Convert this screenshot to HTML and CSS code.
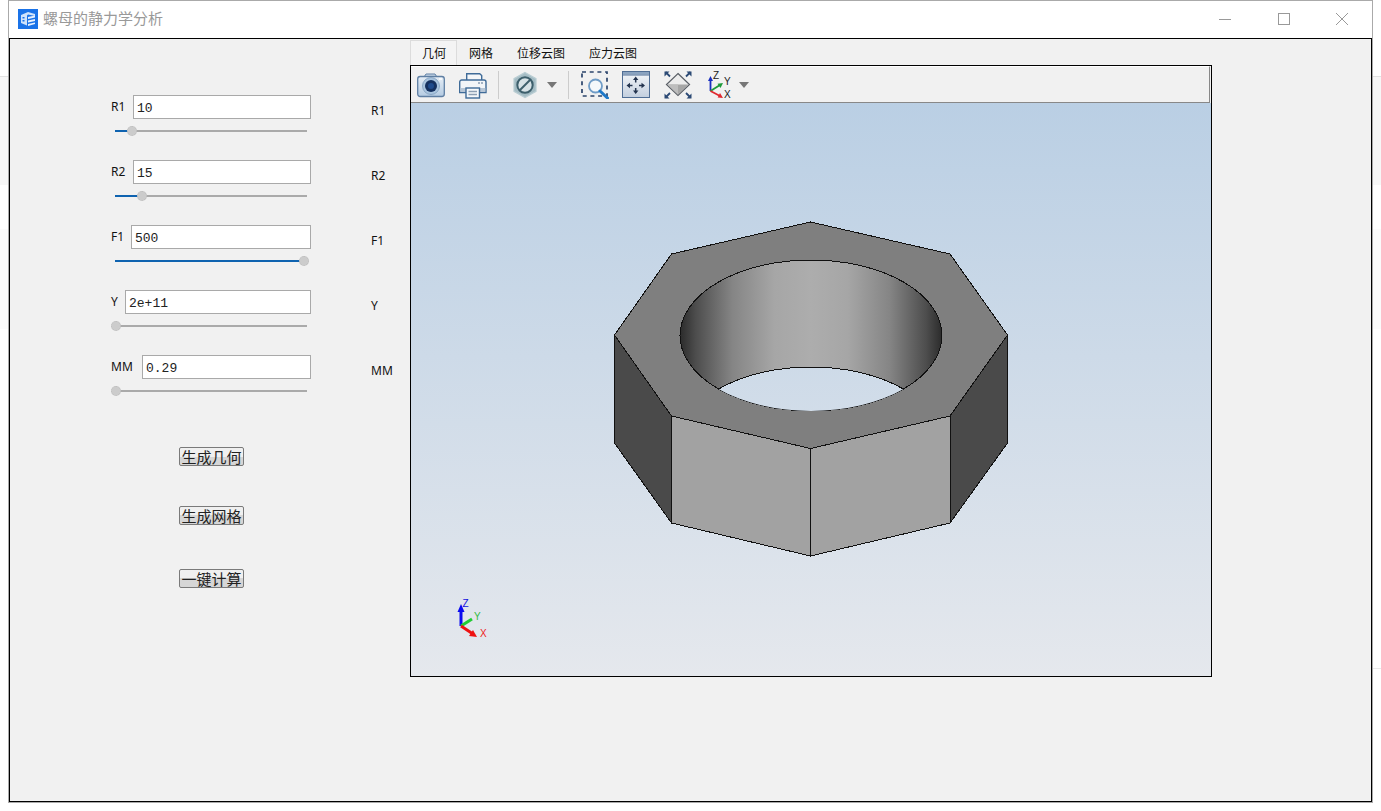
FILE: index.html
```html
<!DOCTYPE html>
<html lang="zh">
<head>
<meta charset="utf-8">
<title>螺母的静力学分析</title>
<link rel="stylesheet" href="styles.css">
</head>
<body>
<div class="desk-band desk-band-a desk-left"></div>
<div class="desk-band desk-band-b desk-left"></div>
<div class="desk-band desk-band-a desk-right"></div>
<div class="desk-band desk-band-b desk-right"></div>
<div class="desk-rule"></div>
<main class="window">
  <header class="titlebar">
    <svg class="logo" viewBox="0 0 20 20" width="20" height="20">
      <rect width="20" height="20" fill="#1a73e8"/>
      <path d="M3 6 L10 3 L17 5 L17 7 L10 5.500 L9 6.500 L9 16.500 L3 14 Z" fill="#cfe3fb"/>
      <path d="M10 8 L17 6.500 V8.500 L10 10 Z M10 11.500 L17 10 V12 L10 13.500 Z M10 15 L17 13.500 V15 L10 17 Z" fill="#e8f2ff"/>
      <path d="M4.500 8 H6.500 V9.500 H4.500 Z M4.500 11 H6.500 V12.500 H4.500 Z" fill="#1a73e8"/>
    </svg>
    <span class="title">螺母的静力学分析</span>
    <div class="winbtns">
      <svg class="winbtn" viewBox="0 0 12 12" width="12" height="12"><path d="M0 6.500 H12" stroke="#999" fill="none"/></svg>
      <svg class="winbtn" viewBox="0 0 12 12" width="12" height="12"><rect x=".5" y=".5" width="11" height="11" stroke="#999" fill="none"/></svg>
      <svg class="winbtn" viewBox="0 0 12 12" width="12" height="12"><path d="M0 0 L12 12 M12 0 L0 12" stroke="#999" fill="none"/></svg>
    </div>
  </header>
  <div class="client">
    <section class="controls">
      <div class="param">
        <div class="field"><label class="lbl">R1</label><div class="input">10</div></div>
        <div class="slider"><div class="fill" style="width:17px"><i class="knob"></i></div></div>
      </div>
      <div class="param">
        <div class="field"><label class="lbl">R2</label><div class="input">15</div></div>
        <div class="slider"><div class="fill" style="width:27px"><i class="knob"></i></div></div>
      </div>
      <div class="param">
        <div class="field"><label class="lbl">F1</label><div class="input input-f">500</div></div>
        <div class="slider"><div class="fill" style="width:189px"><i class="knob"></i></div></div>
      </div>
      <div class="param">
        <div class="field"><label class="lbl">Y</label><div class="input input-y">2e+11</div></div>
        <div class="slider"><div class="fill" style="width:1px"><i class="knob"></i></div></div>
      </div>
      <div class="param">
        <div class="field"><label class="lbl">MM</label><div class="input input-m">0.29</div></div>
        <div class="slider"><div class="fill" style="width:1px"><i class="knob"></i></div></div>
      </div>
      <div class="actions">
        <button class="btn">生成几何</button>
        <button class="btn">生成网格</button>
        <button class="btn">一键计算</button>
      </div>
    </section>
    <section class="values">
      <span>R1</span><span>R2</span><span>F1</span><span>Y</span><span>MM</span>
    </section>
    <section class="tabwidget">
      <nav class="tabs">
        <span class="tab tab-on">几何</span>
        <span class="tab">网格</span>
        <span class="tab">位移云图</span>
        <span class="tab">应力云图</span>
      </nav>
      <div class="pane">
        <div class="toolbar">
          <svg class="tool tool-camera" width="28" height="28" viewBox="0 0 28 28">
            <defs><linearGradient id="cam" x1="0" y1="0" x2="0" y2="1"><stop offset="0" stop-color="#e6eef6"/><stop offset="1" stop-color="#b4cbe2"/></linearGradient></defs>
            <path d="M7 6 L9 3 H18 L20 6 Z" fill="#c9d9e9" stroke="#5f7fa3"/>
            <rect x=".7" y="5.500" width="26.600" height="20" rx="2.500" fill="url(#cam)" stroke="#5f7fa3" stroke-width="1.300"/>
            <path d="M22 8 H25" stroke="#fff" stroke-width="1.500"/>
            <circle cx="14" cy="15" r="8.500" fill="#a9c4de" stroke="#7f9dbc" stroke-width=".8"/>
            <circle cx="14" cy="15" r="6" fill="#14305f"/>
            <circle cx="14" cy="15" r="3" fill="#1e4a8c"/>
          </svg>
          <svg class="tool tool-print" width="28" height="28" viewBox="0 0 28 28">
            <path d="M7.700 9 V2.700 H20.700 L22.700 4.500 V9" fill="#f4f6f8" stroke="#3f6b98" stroke-width="1.400"/>
            <path d="M3 9 H25 A2 2 0 0 1 27 11 V21.500 H.7 V11 A2 2 0 0 1 3 9 Z" fill="#f2f5f8" stroke="#3f6b98" stroke-width="1.400"/>
            <path d="M1.500 17 H26.300 V21 H1.500 Z" fill="#b7c6d6"/>
            <rect x="7" y="17" width="13.500" height="10" fill="#f6f8fa" stroke="#3f6b98" stroke-width="1.400"/>
            <path d="M9.500 20.500 H18 M9.500 23.500 H18" stroke="#8d9fb3" stroke-width="1.500"/>
            <path d="M19 12 H24" stroke="#8a9db2" stroke-width="1.500" stroke-dasharray="2 1"/>
          </svg>
          <i class="sep sep-a"></i>
          <svg class="tool tool-clip" width="24" height="28" viewBox="0 0 24 28">
            <path d="M12 1.500 L23 7.700 V20.300 L12 26.500 L1 20.300 V7.700 Z" fill="#a4bcc4" stroke="#b9cdd3" stroke-width="1.200"/>
            <circle cx="12" cy="14" r="7.700" fill="#d6e2e6" stroke="#3d5f6c" stroke-width="2"/>
            <path d="M6.500 19.500 L17.500 8.500" stroke="#3d5f6c" stroke-width="2"/>
          </svg>
          <i class="caret caret-a"></i>
          <i class="sep sep-b"></i>
          <svg class="tool tool-zoom" width="28" height="28" viewBox="0 0 28 28">
            <rect x="1" y="1" width="25" height="24" fill="none" stroke="#2b446b" stroke-width="1.700" stroke-dasharray="4 3.700"/>
            <circle cx="14.500" cy="15" r="6.500" fill="#f4f8fb" stroke="#6f9cc7" stroke-width="1.800"/>
            <path d="M19 20 L26.500 27" stroke="#1e78c8" stroke-width="3" stroke-linecap="round"/>
          </svg>
          <svg class="tool tool-fit" width="28" height="28" viewBox="0 0 28 28">
            <defs><linearGradient id="fitbg" x1="0" y1="0" x2="0" y2="1"><stop offset="0" stop-color="#f5f7fa"/><stop offset="1" stop-color="#c3cfde"/></linearGradient></defs>
            <rect x=".5" y=".5" width="27" height="26" fill="url(#fitbg)" stroke="#4f6d94"/>
            <rect x="1" y="1" width="26" height="2.500" fill="#8aa3c0"/>
            <path d="M1 4 H27" stroke="#4f6d94"/>
            <path d="M13.700 7 V11.500 M13.700 17 V21.500 M6 14.500 H10.500 M17 14.500 H21.500" stroke="#24344f" stroke-width="1.500"/>
            <path d="M13.700 5.500 L11 9 H16.400 Z M13.700 23 L11 19.500 H16.400 Z M4.500 14.500 L8 11.800 V17.200 Z M23 14.500 L19.500 11.800 V17.200 Z" fill="#24344f"/>
          </svg>
          <svg class="tool tool-view" width="28" height="28" viewBox="0 0 28 28">
            <path d="M14 2.500 L25.500 13.500 L14 24.500 L2.500 13.500 Z" fill="#ececec" stroke="#5a5f66" stroke-width="1.200"/>
            <path d="M3.500 13.500 H24.500 L14 23.500 Z" fill="#a6a6a6"/>
            <path d="M3.500 13.500 L14 23.500 V13.500 Z" fill="#bdbdbd"/>
            <path d="M1.500 1 L6 5.500 M26.500 1 L22 5.500 M1.500 26.500 L6 22 M26.500 26.500 L22 22" stroke="#2c4a75" stroke-width="1.800"/>
            <path d="M.5 .5 H5.500 L.5 5.500 Z M27.500 .5 H22.500 L27.500 5.500 Z M.5 27.500 H5.500 L.5 22.500 Z M27.500 27.500 H22.500 L27.500 22.500 Z" fill="#2c4a75"/>
          </svg>
          <svg class="tool tool-axes" width="24" height="28" viewBox="0 0 24 28">
            <path d="M2.500 20 V9" stroke="#1a2fc0" stroke-width="1.800"/><path d="M2.500 5 L0 10 H5 Z" fill="#1a2fc0"/>
            <path d="M2.500 20 L12 14" stroke="#1e9a3a" stroke-width="1.800"/><path d="M15 12 L9.500 12.800 L12.500 17 Z" fill="#1e9a3a"/>
            <path d="M2.500 20 L12 25" stroke="#e0282e" stroke-width="1.800"/><path d="M15 27 L9.700 26.500 L12 22 Z" fill="#e0282e"/>
            <text class="axt" x="5" y="8">Z</text><text class="axt" x="16" y="14">Y</text><text class="axt" x="16" y="27">X</text>
          </svg>
          <i class="caret caret-b"></i>
        </div>
        <svg class="view" width="800" height="573" viewBox="411 103 800 573">
          <defs>
            <linearGradient id="sky" gradientUnits="userSpaceOnUse" x1="0" y1="103" x2="0" y2="676">
              <stop offset="0" stop-color="#bacfe4"/><stop offset="1" stop-color="#e5e8ed"/>
            </linearGradient>
            <linearGradient id="bore" gradientUnits="userSpaceOnUse" x1="680" y1="0" x2="942" y2="0">
              <stop offset="0" stop-color="#2b2b2b"/>
              <stop offset=".06" stop-color="#4d4d4d"/>
              <stop offset=".2" stop-color="#858585"/>
              <stop offset=".36" stop-color="#a6a6a6"/>
              <stop offset=".5" stop-color="#adadad"/>
              <stop offset=".64" stop-color="#a6a6a6"/>
              <stop offset=".8" stop-color="#858585"/>
              <stop offset=".94" stop-color="#4d4d4d"/>
              <stop offset="1" stop-color="#2b2b2b"/>
            </linearGradient>
            <clipPath id="holeclip"><ellipse cx="811" cy="335.500" rx="131" ry="75.500"/></clipPath>
          </defs>
          <rect x="411" y="103" width="800" height="573" fill="url(#sky)"/>
          <g class="nut" stroke="#111" stroke-width="1">
            <path d="M614.500 335 L671.500 416 V523 L614.500 443 Z" fill="#4a4a4a"/>
            <path d="M1007.500 335 L950 416 V523 L1007.500 443 Z" fill="#4a4a4a"/>
            <path d="M671.500 416 L810.500 448.500 V556 L671.500 523 Z" fill="#a2a2a2"/>
            <path d="M950 416 L810.500 448.500 V556 L950 523 Z" fill="#a2a2a2"/>
            <path d="M810.500 222 L950 254 L1007.500 335 L950 416 L810.500 448.500 L671.500 416 L614.500 335 L671.500 254 Z" fill="#7f7f7f"/>
            <ellipse cx="811" cy="335.500" rx="131" ry="75.500" fill="url(#bore)"/>
            <ellipse cx="811" cy="442.500" rx="131" ry="75.500" fill="url(#sky)" clip-path="url(#holeclip)"/>
          </g>
          <g class="triad">
            <path d="M461 626 V610" stroke="#0a0af0" stroke-width="3"/><path d="M461 604 L457.500 612 H464.500 Z" fill="#0a0af0"/>
            <path d="M461 626 L472 619" stroke="#22cc33" stroke-width="3"/>
            <path d="M461 626 L473 634" stroke="#ee1111" stroke-width="3"/><path d="M477 637 L469 636 L473 630 Z" fill="#ee1111"/>
            <text class="tx tx-z" x="462.500" y="607">Z</text>
            <text class="tx tx-y" x="474" y="619.500">Y</text>
            <text class="tx tx-x" x="480" y="637">X</text>
          </g>
        </svg>
      </div>
    </section>
  </div>
</main>
</body>
</html>
```

FILE: styles.css
```css
* { box-sizing: border-box; }
html, body { margin: 0; padding: 0; }
body {
  width: 1381px;
  height: 811px;
  background: #fff;
  overflow: hidden;
  position: relative;
  font-family: "Noto Sans", "Noto Sans CJK SC", sans-serif;
}
.desk-band { position: absolute; width: 8px; }
.desk-band-a { top: 76px; height: 109px; background: #f7f7f7; border-top: 1px solid #e2e2e2; }
.desk-band-b { top: 229px; height: 100px; background: #fbfbfb; }
.desk-left { left: 0; }
.desk-right { left: 1373px; }
.desk-rule { position: absolute; left: 1373px; top: 668px; width: 8px; height: 1px; background: #e9e9e9; }

.window {
  position: absolute;
  left: 8px;
  top: 0;
  width: 1365px;
  height: 803px;
  display: flex;
  flex-direction: column;
  background: #fff;
  border: 1px solid #aaa;
}
.titlebar {
  height: 37px;
  flex: none;
  display: flex;
  align-items: center;
  padding-left: 9px;
  padding-bottom: 1px;
}
.logo { flex: none; margin-right: 5px; }
.title {
  font: 15px/20px "Noto Sans CJK SC", sans-serif;
  color: #999;
  position: relative;
  top: -1px;
}
.winbtns { margin-left: auto; display: flex; gap: 46.5px; padding-right: 24px; }
.winbtn { display: block; }

.client {
  flex: 1;
  display: flex;
  background: #f1f1f1;
  border: 1px solid #000;
  padding-top: 1px;
}
.controls {
  width: 361px;
  flex: none;
  padding: 55px 0 0 101px;
  display: flex;
  flex-direction: column;
  gap: 23px;
}
.param { height: 42px; width: 200px; display: flex; flex-direction: column; }
.field { display: flex; align-items: center; justify-content: space-between; height: 24px; }
.lbl {
  font-size: 12px;
  line-height: 16px;
  color: #111;
}
.input {
  height: 24px;
  width: 178px;
  flex: none;
  background: #fff;
  border: 1px solid #a9a9a9;
  font: 13px/25px "Liberation Mono", monospace;
  color: #222;
  padding-left: 3px;
}
.input-f { width: 180px; }
.input-y { width: 186px; }
.input-m { width: 169px; }

.slider {
  position: relative;
  width: 192px;
  height: 2px;
  margin: 11px 0 0 4px;
  background: #aaa;
}
.fill { position: relative; height: 2px; background: #0f63b0; }
.knob {
  position: absolute;
  right: -5px;
  top: -4px;
  width: 10px;
  height: 10px;
  border-radius: 50%;
  background: #ccc;
  border: 1px dotted #bbb;
}
.actions {
  display: flex;
  flex-direction: column;
  align-items: flex-start;
  padding: 27px 0 0 68px;
}
.btn {
  width: 65px;
  height: 19px;
  padding: 0;
  border: 1px solid #7a7a7a;
  border-radius: 2px;
  background: linear-gradient(#f0f0f0 50%, #d6d6d6 50%);
  color: #222;
  font: 15px/17px "Noto Sans CJK SC", sans-serif;
  margin-bottom: 40px;
  white-space: nowrap;
}
.btn:nth-child(2) { margin-bottom: 44px; }

.values {
  width: 39px;
  flex: none;
  padding-top: 63px;
  display: flex;
  flex-direction: column;
  gap: 50px;
  font-size: 12px;
  color: #111;
}
.values span { height: 15px; line-height: 15px; }

.tabwidget { width: 802px; flex: none; height: 637px; display: flex; flex-direction: column; }
.tabs { display: flex; height: 25px; flex: none; }
.tab {
  font: 12px/25px "Noto Sans CJK SC", sans-serif;
  color: #111;
  padding: 0 12px;
  white-space: nowrap;
  height: 25px;
}
.tab-on { background: #f4f4f4; border: 1px solid #dcdcdc; border-bottom: 0; padding: 0 11px; line-height: 24px; width: 47px; }
.pane { flex: 1; border: 1px solid #000; display: flex; flex-direction: column; background: #f1f1f1; }
.toolbar {
  height: 37px;
  flex: none;
  display: flex;
  align-items: center;
  padding-left: 6px;
  margin-right: 1px;
  background: #f1f1f1;
  border-top: 1px solid #fff;
  border-right: 1px solid #888;
  border-bottom: 1px solid #888;
}
.tool { display: block; flex: none; }
.tool-print { margin-left: 14px; }
.sep { width: 1px; height: 28px; background: #ccc; flex: none; }
.sep-a { margin-left: 11px; }
.tool-clip { margin-left: 14px; }
.caret { width: 0; height: 0; border: 5.5px solid transparent; border-top: 6px solid #777; border-bottom: 0; flex: none; }
.caret-a { margin-left: 10px; }
.sep-b { margin-left: 11px; }
.tool-zoom { margin-left: 12px; }
.tool-fit { margin-left: 13px; }
.tool-view { margin-left: 14px; }
.tool-axes { margin-left: 16px; }
.caret-b { margin-left: 7px; }
.axt { font-size: 10px; font-family: "Liberation Sans", sans-serif; fill: #222; }
.view { display: block; flex: none; }
.nut { shape-rendering: crispEdges; }
.tx { font-size: 10px; font-family: "Liberation Sans", sans-serif; }
.tx-z { fill: #1111dd; }
.tx-y { fill: #33bb44; }
.tx-x { fill: #ee2222; }
```
